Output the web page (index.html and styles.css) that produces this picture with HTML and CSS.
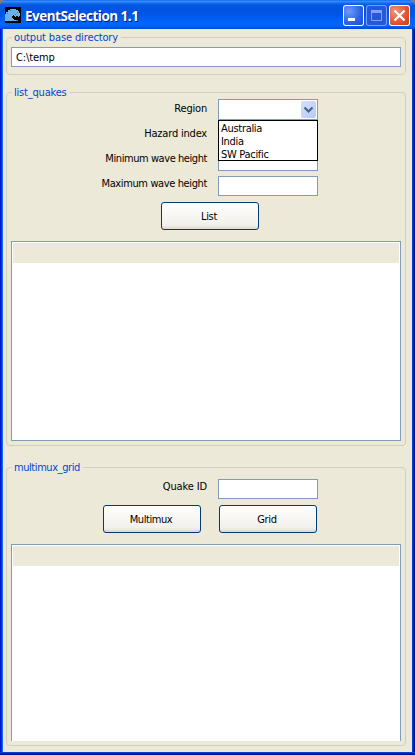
FILE: index.html
```html
<!DOCTYPE html>
<html lang="en">
<head>
<meta charset="utf-8">
<title>EventSelection 1.1</title>
<link rel="stylesheet" href="styles.css">
</head>
<body>
<div class="window">
  <header class="titlebar">
    <svg class="app-icon" width="16" height="16" viewBox="0 0 16 16">
      <rect width="16" height="16" fill="#000"/>
      <path d="M0 14V7h1V5h2V3h2V2h6v1h2v1h1v2h1v3h-1v1h-1V9h-2v1h-1V9H9V8H8v1H7v2h1v1h1v1h2v1H0z" fill="#69b0f5"/>
      <path d="M2 6h1v1H2zM5 3h1v1H5zM12 5h1v1h-1zM10 7h1v1h-1zM11 13h2v1h-2z" fill="#3c7cba"/>
    </svg>
    <h1 class="title">EventSelection 1.1</h1>
    <div class="controls">
      <span class="control">
        <svg width="21" height="21" viewBox="0 0 21 21"><path d="M5 13h7v3H5z" fill="#fff"/></svg>
      </span>
      <span class="control disabled">
        <svg width="21" height="21" viewBox="0 0 21 21"><path d="M5.500 5.500h10v10h-10z" fill="none" stroke="#8d9df0"/><path d="M5 5h11v3H5z" fill="#8d9df0"/></svg>
      </span>
      <span class="control close">
        <svg width="21" height="21" viewBox="0 0 21 21"><path d="M5.500 5.500l10 10M15.500 5.500l-10 10" stroke="#fff" stroke-width="2.300"/></svg>
      </span>
    </div>
  </header>
  <main class="content">
    <section class="group output">
      <h2 class="legend"><span class="looser">output base directory</span></h2>
      <div class="field wide looser">C:\temp</div>
    </section>
    <section class="group quakes">
      <h2 class="legend"><span class="loose">list_quakes</span></h2>
      <div class="form">
        <div class="label loose">Region</div>
        <div class="field combo">
          <span class="arrow"><svg width="15" height="17" viewBox="0 0 15 17"><path d="M3.500 6.500l4 4 4-4" fill="none" stroke="#4d6185" stroke-width="2.200"/></svg></span>
          <ul class="options"><li>Australia</li><li>India</li><li>SW Pacific</li></ul>
        </div>
        <div class="label loose">Hazard index</div><div class="field"></div>
        <div class="label tight">Minimum wave height</div><div class="field"></div>
        <div class="label snug">Maximum wave height</div><div class="field"></div>
      </div>
      <div class="buttons"><div class="button">List</div></div>
      <div class="list"><div class="list-head"></div></div>
    </section>
    <section class="group grid">
      <h2 class="legend"><span class="tight">multimux_grid</span></h2>
      <div class="form"><div class="label looser">Quake ID</div><div class="field"></div></div>
      <div class="buttons"><div class="button tight">Multimux</div><div class="button">Grid</div></div>
      <div class="list open"><div class="list-head"></div></div>
    </section>
  </main>
</div>
</body>
</html>
```
FILE: styles.css
```css
* { box-sizing: border-box; }
body {
  margin: 0;
  background: #7a7f86;
  font-family: "DejaVu Sans Condensed", "DejaVu Sans", sans-serif;
  font-stretch: condensed;
  font-size: 11px;
  letter-spacing: -0.3px;
  line-height: 13px;
  color: #000;
}
h1, h2, ul { margin: 0; padding: 0; font-weight: normal; font-size: inherit; }
li { list-style: none; }
svg { display: block; }

.looser { letter-spacing: -0.13px; }
.loose { letter-spacing: -0.2px; }
.snug { letter-spacing: -0.38px; }
.tight { letter-spacing: -0.43px; }

.window {
  display: flex;
  flex-direction: column;
  width: 415px;
  height: 755px;
  padding: 0 3px 3px;
  border-radius: 7px 7px 0 0;
  overflow: hidden;
  background: linear-gradient(90deg, #0019cf 0 1px, #0831d9 1px 2px, #166aee 2px 3px, #0855dd 3px 412px, #0441d8 412px 413px, #001ea0 413px 414px, #00138c 414px);
  position: relative;
}
.window::after {
  content: "";
  position: absolute;
  inset: auto 0 0 0;
  height: 3px;
  background: linear-gradient(#0441d8 0 1px, #001ea0 1px 2px, #00138c 2px);
}
.titlebar {
  display: flex;
  flex: none;
  height: 29px;
  margin: 0 -3px;
  padding: 0 5px;
  background: linear-gradient(#0058e6 0, #3a93ff 1px, #2a83f8 2px, #0a5fe9 4px, #0054e0 7px, #0055e5 14px, #0061f6 20px, #0066ff 25px, #005cf0 27px, #0043cf 29px);
}
.app-icon { margin-top: 7px; }
.title {
  margin: 8px 0 0 4px;
  font: bold 13.5px/16px "Open Sans", sans-serif;
  letter-spacing: -0.5px;
  color: #fff;
  text-shadow: 1px 1px #0a1883;
  white-space: nowrap;
}
.controls { display: flex; gap: 2px; margin: 5px 0 0 auto; }
.control {
  width: 21px;
  height: 21px;
  border-radius: 3px;
  background: radial-gradient(circle at 30% 30%, #6d9bf5, #2c62e8 55%, #1c49cf);
  box-shadow: inset 0 0 0 1px #fff;
}
.disabled { background: #2459dd; box-shadow: inset 0 0 0 1px #7e9df0; }
.close { background: radial-gradient(circle at 30% 30%, #f09377, #e0512b 60%, #c43c13); }

.content {
  flex: none;
  height: 723px;
  padding: 8px 6px 6px 3px;
  background: #ece9d8;
}
.group {
  border: 1px solid #d0d0bf;
  border-radius: 4px;
  padding: 0 4px;
}
.output { height: 38px; }
.quakes { height: 354px; margin-top: 17px; }
.grid { height: 279px; margin-top: 21px; }
.legend { height: 10px; color: #0046d5; }
.legend span {
  display: block;
  width: fit-content;
  margin-left: 1px;
  padding: 0 3px 0 2px;
  background: #ece9d8;
  position: relative;
  top: -7px;
}
.field {
  width: 100px;
  height: 20px;
  border: 1px solid #7f9db9;
  background: #fff;
}
.output .wide { width: 390px; padding: 3px 4px; margin-top: -1px; }
.form {
  display: grid;
  grid-template-columns: 196px 100px;
  column-gap: 11px;
  grid-auto-rows: 20px;
  row-gap: 5px;
  margin-top: -4px;
}
.quakes .field { margin-top: 2px; }
.quakes .combo { margin-top: 0; }
.grid .form { margin-top: 1px; }
.label { padding-top: 3px; text-align: right; white-space: nowrap; }
.grid .label { padding-top: 1px; }
.combo { position: relative; height: 21px; }
.arrow {
  position: absolute;
  top: 1px;
  right: 1px;
  width: 15px;
  height: 17px;
  border-radius: 2px;
  background: linear-gradient(135deg, #d4e1fe, #b3cafb);
}
.options {
  position: absolute;
  z-index: 1;
  left: -1px;
  top: 20px;
  width: 100px;
  height: 41px;
  padding: 1px 2px 0;
  border: 1px solid #000;
  background: #fff;
}
.buttons { display: flex; gap: 18px; margin: 8px 0 0 150px; }
.grid .buttons { margin: 6px 0 0 92px; }
.button {
  width: 98px;
  height: 28px;
  padding: 7px 2px 0 0;
  border: 1px solid #003c74;
  border-radius: 3px;
  text-align: center;
  background: linear-gradient(#fff, #f1f0eb 85%, #dcd8ce);
}
.list {
  width: 390px;
  height: 200px;
  margin-top: 11px;
  padding: 1px;
  border: 1px solid #7f9db9;
  background: #fff;
}
.open { height: 197px; border-bottom: 0; }
.list-head { height: 20px; background: #ece9d8; }
```
